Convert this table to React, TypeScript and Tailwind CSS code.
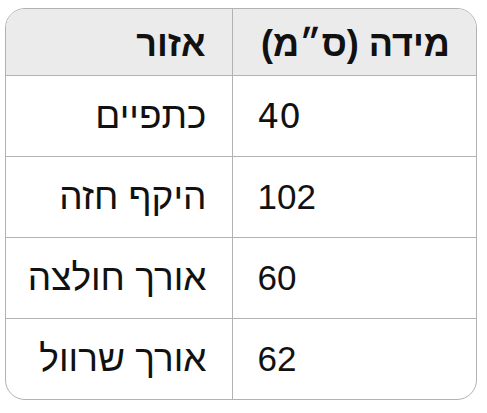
import React from "react";

const rows = [
  { area: "כתפיים", size: "40", numFont: "font-['DejaVu_Sans',sans-serif] text-[34px]" },
  { area: "היקף חזה", size: "102", numFont: "font-['Liberation_Sans',Arial,sans-serif] text-[35px]" },
  { area: "אורך חולצה", size: "60", numFont: "font-['Liberation_Sans',Arial,sans-serif] text-[35px]" },
  { area: "אורך שרוול", size: "62", numFont: "font-['Liberation_Sans',Arial,sans-serif] text-[35px]" },
];

export default function App() {
  return (
    <div className="min-h-screen bg-white pl-[5px] pt-[8px]">
      <div
        dir="rtl"
        className="w-[472px] overflow-hidden rounded-[20px] border-[1.5px] border-[#b2b2b2]"
      >
        <table className="w-full table-fixed border-collapse text-[#111] font-['Liberation_Sans',Arial,sans-serif] leading-none whitespace-nowrap">
          <colgroup>
            <col className="w-[244px]" />
            <col />
          </colgroup>
          <thead>
            <tr className="h-[66px] bg-[#ebebeb]">
              <th className="border-b-[1.5px] border-l-[1.5px] border-[#b2b2b2] pr-[26px] pl-[10px] pt-[4px] text-right text-[36px] font-bold">
                מידה (ס״מ)
              </th>
              <th className="border-b-[1.5px] border-[#b2b2b2] px-[26px] pt-[4px] text-right text-[36px] font-bold">
                אזור
              </th>
            </tr>
          </thead>
          <tbody>
            {rows.map((row, i) => (
              <tr key={row.area} className="h-[81px]">
                <td
                  className={`border-l-[1.5px] border-[#b2b2b2] px-[25px] text-left ${row.numFont} ${
                    i < rows.length - 1 ? "border-b-[1.5px]" : ""
                  }`}
                >
                  {row.size}
                </td>
                <td
                  className={`border-[#b2b2b2] pr-[25px] pl-[8px] text-right text-[37px] ${
                    i < rows.length - 1 ? "border-b-[1.5px]" : ""
                  }`}
                >
                  {row.area}
                </td>
              </tr>
            ))}
          </tbody>
        </table>
      </div>
    </div>
  );
}
